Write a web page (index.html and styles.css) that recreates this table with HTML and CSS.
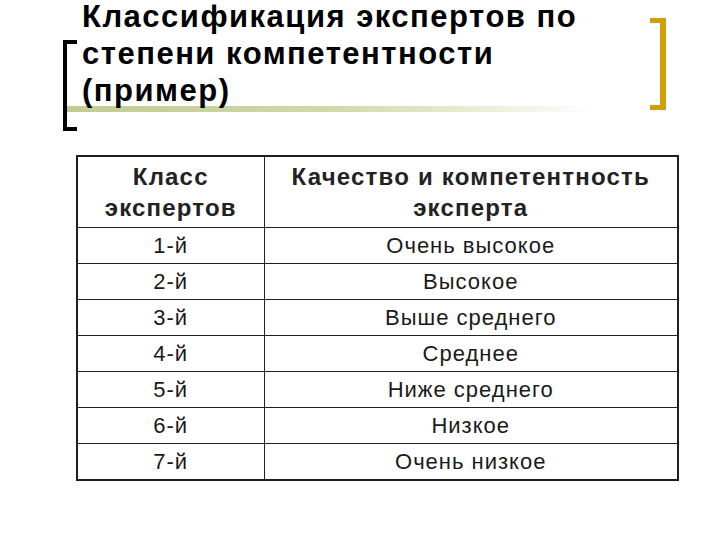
FILE: index.html
```html
<!DOCTYPE html>
<html lang="ru">
<head>
<meta charset="utf-8">
<link rel="stylesheet" href="styles.css">
</head>
<body>
<div class="slide">
  <div class="title-block">
    <span class="underline"></span>
    <span class="bracket-left"></span>
    <span class="bracket-right"></span>
    <h1 class="title">Классификация экспертов по<br>степени компетентности<br>(пример)</h1>
  </div>
  <table class="grid">
    <colgroup><col class="c1"><col class="c2"></colgroup>
    <thead>
      <tr><th>Класс<br>экспертов</th><th>Качество и компетентность<br>эксперта</th></tr>
    </thead>
    <tbody>
      <tr><td>1-й</td><td>Очень высокое</td></tr>
      <tr><td>2-й</td><td>Высокое</td></tr>
      <tr><td>3-й</td><td>Выше среднего</td></tr>
      <tr><td>4-й</td><td>Среднее</td></tr>
      <tr><td>5-й</td><td>Ниже среднего</td></tr>
      <tr><td>6-й</td><td>Низкое</td></tr>
      <tr><td>7-й</td><td>Очень низкое</td></tr>
    </tbody>
  </table>
</div>
</body>
</html>
```
FILE: styles.css
```css
html, body {
  margin: 0;
  padding: 0;
  background: #ffffff;
}
.slide {
  width: 720px;
  height: 540px;
  position: relative;
  font-family: "Liberation Sans", Arial, sans-serif;
  color: #111111;
}
.title-block {
  position: relative;
  height: 155px;
}
.underline {
  position: absolute;
  left: 66px;
  top: 106px;
  width: 530px;
  height: 6px;
  background: linear-gradient(to right, #c2cb92 0%, #d0d9a8 50%, #e9eed6 78%, rgba(255,255,255,0) 100%);
}
.bracket-left {
  position: absolute;
  left: 63px;
  top: 40px;
  width: 14px;
  height: 91px;
  box-sizing: border-box;
  border-left: 4px solid #000000;
  border-top: 4px solid #000000;
  border-bottom: 4px solid #000000;
}
.bracket-right {
  position: absolute;
  left: 650px;
  top: 18px;
  width: 16px;
  height: 92px;
  box-sizing: border-box;
  border-right: 6px solid #d09f00;
  border-top: 5px solid #d09f00;
  border-bottom: 5px solid #d09f00;
}
.title {
  position: relative;
  margin: 0;
  padding: 0 0 0 82px;
  font-size: 31px;
  line-height: 37px;
  letter-spacing: 1.5px;
  font-weight: bold;
  color: #000000;
  transform: translateY(-2px);
}
.grid {
  margin-left: 76px;
  width: 601px;
  border-collapse: collapse;
  border: 2px solid #1e1e1e;
  table-layout: fixed;
}
.c1 { width: 187px; }
.c2 { width: 414px; }
.grid th {
  height: 70px;
  padding: 0;
  font-size: 24px;
  line-height: 31px;
  letter-spacing: 1.2px;
  font-weight: bold;
  color: #222222;
  text-align: center;
  border-bottom: 1px solid #222222;
  border-right: 1px solid #222222;
}
.grid td {
  height: 35px;
  padding: 0;
  font-size: 22px;
  letter-spacing: 1px;
  text-align: center;
  color: #1a1a1a;
  border-bottom: 1px solid #222222;
  border-right: 1px solid #222222;
}
```
